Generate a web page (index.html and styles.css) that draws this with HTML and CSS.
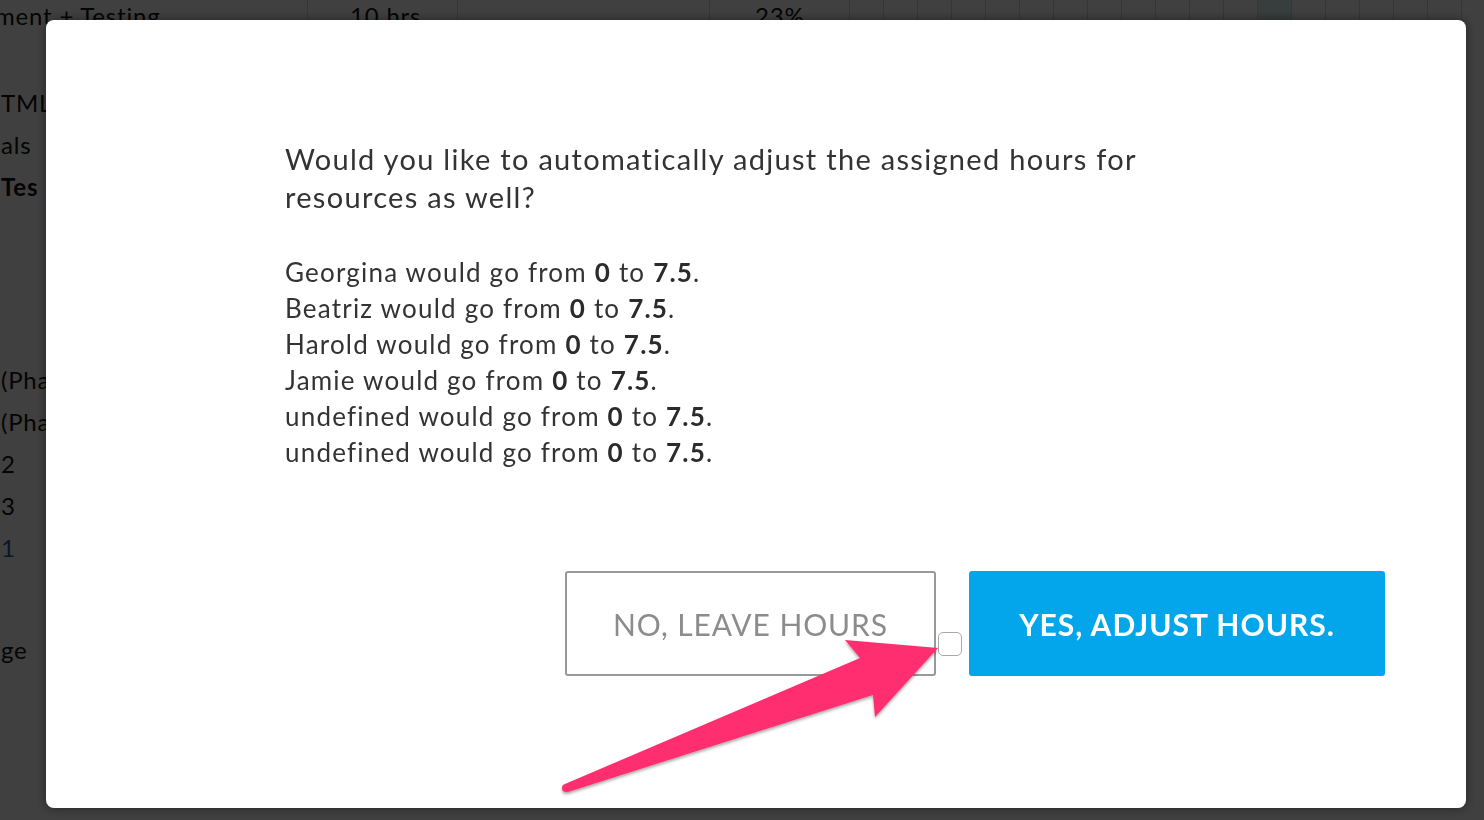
FILE: index.html
```html
<!DOCTYPE html>
<html lang="en">
<head>
  <meta charset="UTF-8">
  <title>Adjust hours</title>
  <link rel="stylesheet" href="styles.css">
</head>
<body>

  <div class="page">
    <div class="row-top">
      <div class="cell label">ment + Testing</div>
      <div class="cell num">10 hrs</div>
      <div class="cell wide"></div>
      <div class="cell pct">23%</div>
      <div class="days">
        <span></span><span></span><span></span><span></span><span></span><span></span>
        <span></span><span></span><span></span><span></span><span></span><span></span>
        <span class="today"></span><span></span><span></span><span></span><span></span><span></span>
      </div>
    </div>
    <div class="rows">
      <div class="line"></div>
      <div class="line">TML</div>
      <div class="line">als</div>
      <div class="line strong">Tes</div>
      <div class="gap gap-tall"></div>
      <div class="line">(Pha</div>
      <div class="line">(Pha</div>
      <div class="line">2</div>
      <div class="line">3</div>
      <div class="line link">1</div>
      <div class="gap"></div>
      <div class="line">ge</div>
    </div>
  </div>

  <div class="overlay"></div>

  <div class="modal">
    <div class="modal-body">
      <p class="question">Would you like to automatically adjust the assigned hours for resources as well?</p>
      <ul class="changes">
        <li>Georgina would go from <b>0</b> to <b>7.5</b>.</li>
        <li>Beatriz would go from <b>0</b> to <b>7.5</b>.</li>
        <li>Harold would go from <b>0</b> to <b>7.5</b>.</li>
        <li>Jamie would go from <b>0</b> to <b>7.5</b>.</li>
        <li>undefined would go from <b>0</b> to <b>7.5</b>.</li>
        <li>undefined would go from <b>0</b> to <b>7.5</b>.</li>
      </ul>
    </div>
    <div class="actions">
      <button class="btn btn-no">NO, LEAVE HOURS</button>
      <span class="check"></span>
      <button class="btn btn-yes">YES, ADJUST HOURS.</button>
    </div>
  </div>

  <svg class="arrow" width="1484" height="820" viewBox="0 0 1484 820">
    <defs>
      <filter id="shade" x="-10%" y="-10%" width="120%" height="130%">
        <feDropShadow dx="0" dy="2" stdDeviation="1.5" flood-color="#000" flood-opacity="0.35"/>
      </filter>
    </defs>
    <g filter="url(#shade)" fill="#ff2d6f">
      <polygon points="565,784 860,658 845,640 938,648 875,717 873,695 568,792"/>
      <circle cx="566" cy="788" r="4"/>
    </g>
  </svg>

</body>
</html>
```

FILE: styles.css
```css
:root {
  --text: #333;
  --blue: #03a5eb;
  --muted: #8c8c8c;
  --radius: 8px;
}

* {
  margin: 0;
  padding: 0;
  box-sizing: border-box;
}

html, body {
  height: 100%;
  overflow: hidden;
}

body {
  font-family: Lato, 'Open Sans', sans-serif;
  background: #fff;
  color: var(--text);
}

/* Page behind the dialog */
.page {
  height: 100%;
  color: #111;
  font-size: 24px;
  letter-spacing: 0.8px;
}

.row-top {
  display: flex;
  height: 30px;
}

.cell {
  height: 100%;
  border-right: 1px solid #d8d8d8;
  display: flex;
  align-items: center;
}

.label {
  width: 313px;
  margin-left: -5px;
}

.num {
  width: 150px;
  padding-left: 42px;
}

.wide {
  width: 252px;
}

.pct {
  width: 140px;
  padding-left: 45px;
}

.days {
  display: flex;
  flex: 1;
  height: 100%;
}

.days span {
  width: 34px;
  flex-shrink: 0;
  border-right: 1px solid #d8d8d8;
}

.days .today {
  background: #e0f2f2;
}

.rows {
  display: flex;
  flex-direction: column;
  padding-top: 10px;
}

.line {
  height: 42px;
  line-height: 42px;
  padding-left: 1px;
}

.line.strong {
  font-weight: 700;
}

.line.link {
  color: #1d5fa8;
}

.gap {
  height: 60px;
}

.gap-tall {
  height: 151px;
}

.overlay {
  position: fixed;
  inset: 0;
  background: rgba(0, 0, 0, 0.75);
}

/* Dialog */
.modal {
  position: fixed;
  left: 46px;
  top: 20px;
  width: 1420px;
  height: 788px;
  background: #fff;
  border-radius: var(--radius);
  box-shadow: 0 0 12px rgba(0, 0, 0, 0.45);
  display: flex;
  flex-direction: column;
  padding: 120px 81px 132px 239px;
}

.modal-body {
  flex: 1;
}

.question {
  font-size: 29px;
  line-height: 38px;
  letter-spacing: 1.3px;
  max-width: 880px;
  margin-bottom: 38px;
}

.changes {
  list-style: none;
  font-size: 26px;
  line-height: 36px;
  letter-spacing: 1.2px;
}

.changes b {
  font-weight: 700;
  color: #2b2b2b;
}

.actions {
  display: flex;
  justify-content: flex-end;
  align-items: flex-start;
}

.btn {
  font-family: inherit;
  font-size: 30px;
  height: 105px;
  border-radius: 3px;
  cursor: pointer;
}

.btn-no {
  width: 371px;
  background: #fff;
  color: var(--muted);
  border: 2px solid #999;
  letter-spacing: 0.9px;
}

.btn-yes {
  width: 416px;
  background: var(--blue);
  color: #fff;
  border: none;
  font-weight: 700;
  letter-spacing: 1px;
}

.check {
  width: 24px;
  height: 24px;
  margin: 61px 7px 0 2px;
  border: 1px solid #aaa;
  border-radius: 5px;
  background: #fff;
}

.arrow {
  position: fixed;
  left: 0;
  top: 0;
  pointer-events: none;
}
```
